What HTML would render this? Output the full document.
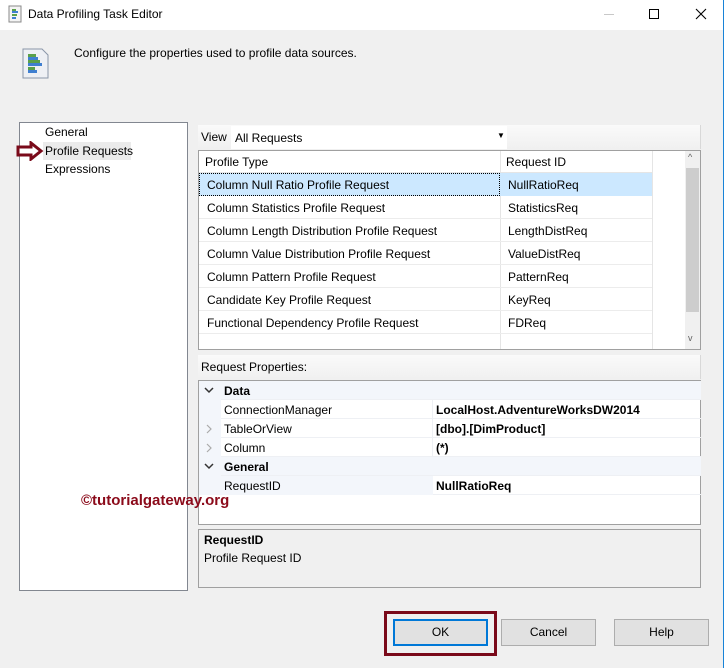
<!DOCTYPE html>
<html><head><style>
*{margin:0;padding:0;box-sizing:border-box}
body{width:724px;height:668px;background:#f0f0f0;font-family:"Liberation Sans",sans-serif;font-size:12px;color:#000;position:relative;overflow:hidden}
.a{position:absolute;white-space:nowrap}
.row{position:absolute;left:199px;width:486px;height:23px;border-bottom:1px solid #ececec}
.row span{position:absolute;top:5px}
.pr{position:absolute;left:199px;width:502px;height:19px;border-bottom:1px solid #eef0f4}
.pr span{position:absolute;top:3px}
.btn{position:absolute;top:619px;height:27px;width:95px;background:#e1e1e1;border:1px solid #adadad;text-align:center;line-height:25px}
</style></head><body>
<div class="a" style="left:0;top:0;width:724px;height:30px;background:#fff"></div>
<div class="a" style="left:723px;top:0;width:1px;height:668px;background:#1883d7"></div>
<svg class="a" style="left:8px;top:5px" width="14" height="18"><rect x="1" y="1" width="12" height="16" fill="#f4f4f4" stroke="#8a8a8a"/><rect x="4" y="4" width="4" height="2" fill="#5aa04a"/><rect x="4" y="6" width="6" height="2" fill="#3f7fd0"/><rect x="4" y="9" width="5" height="2" fill="#5aa04a"/><rect x="4" y="12" width="4" height="2" fill="#3f7fd0"/></svg>
<div class="a" style="left:28px;top:7px;font-size:12px">Data Profiling Task Editor</div>
<div class="a" style="left:604px;top:14px;width:10px;height:1px;background:#c8c8c8"></div>
<div class="a" style="left:649px;top:9px;width:10px;height:10px;border:1px solid #000"></div>
<svg class="a" style="left:695px;top:8px" width="12" height="12"><path d="M1 1L11 11M11 1L1 11" stroke="#000" stroke-width="1.1"/></svg>

<svg class="a" style="left:22px;top:48px" width="28" height="32"><path d="M1 1H20L26 7V30H1Z" fill="#eef0f4" stroke="#8a96a8"/><rect x="6" y="6" width="8" height="3" fill="#5aa04a"/><rect x="6" y="9" width="10" height="3" fill="#3f7fd0"/><rect x="6" y="12" width="12" height="3" fill="#5aa04a"/><rect x="6" y="15" width="14" height="3" fill="#3f7fd0"/><rect x="6" y="19" width="7" height="3" fill="#5aa04a"/><rect x="6" y="22" width="9" height="3" fill="#3f7fd0"/></svg>
<div class="a" style="left:74px;top:46px">Configure the properties used to profile data sources.</div>

<div class="a" style="left:19px;top:122px;width:169px;height:469px;background:#fff;border:1px solid #828790"></div>
<div class="a" style="left:43px;top:142px;width:88px;height:18px;background:#ebebeb"></div>
<div class="a" style="left:45px;top:125px">General</div>
<div class="a" style="left:45px;top:144px">Profile Requests</div>
<div class="a" style="left:45px;top:162px">Expressions</div>
<svg class="a" style="left:16px;top:141px" width="28" height="20"><path d="M2 6H15V2L25 10L15 18V14H2Z" fill="#fff" stroke="#7a0a1a" stroke-width="3" stroke-linejoin="miter"/></svg>

<div class="a" style="left:198px;top:125px;width:503px;height:24px;background:linear-gradient(#fafafa,#f0f0f0);border-right:1px solid #d8d8d8"></div>
<div class="a" style="left:201px;top:130px">View</div>
<div class="a" style="left:231px;top:126px;width:276px;height:23px;background:#fff"></div>
<div class="a" style="left:235px;top:131px">All Requests</div>
<div class="a" style="left:497px;top:131px;font-size:8px">▼</div>

<div class="a" style="left:198px;top:150px;width:503px;height:200px;background:#fff;border:1px solid #a0a0a0"></div>
<div class="a" style="left:199px;top:151px;width:454px;height:22px;border-bottom:1px solid #e5e5e5;border-right:1px solid #e5e5e5"></div>
<div class="a" style="left:500px;top:151px;width:1px;height:198px;background:#e5e5e5"></div>
<div class="a" style="left:652px;top:151px;width:1px;height:198px;background:#e5e5e5"></div>
<div class="a" style="left:205px;top:155px">Profile Type</div>
<div class="a" style="left:506px;top:155px">Request ID</div>
<div class="a" style="left:685px;top:151px;width:15px;height:198px;background:#f0f0f0"></div>
<div class="a" style="left:686px;top:168px;width:13px;height:144px;background:#cdcdcd"></div>
<div class="a" style="left:688px;top:152px;font-size:9px;color:#606060">^</div>
<div class="a" style="left:688px;top:333px;font-size:9px;color:#606060">v</div>
<div class="a" style="left:199px;top:173px;width:453px;height:23px;background:#cce8ff"></div>
<div class="a" style="left:199px;top:173px;width:301px;height:23px;border:1px dotted #000"></div>
<div class="row" style="top:173px;border:none;width:453px"><span style="left:8px">Column Null Ratio Profile Request</span><span style="left:309px">NullRatioReq</span></div>
<div class="row" style="top:196px;width:453px"><span style="left:8px">Column Statistics Profile Request</span><span style="left:309px">StatisticsReq</span></div>
<div class="row" style="top:219px;width:453px"><span style="left:8px">Column Length Distribution Profile Request</span><span style="left:309px">LengthDistReq</span></div>
<div class="row" style="top:242px;width:453px"><span style="left:8px">Column Value Distribution Profile Request</span><span style="left:309px">ValueDistReq</span></div>
<div class="row" style="top:265px;width:453px"><span style="left:8px">Column Pattern Profile Request</span><span style="left:309px">PatternReq</span></div>
<div class="row" style="top:288px;width:453px"><span style="left:8px">Candidate Key Profile Request</span><span style="left:309px">KeyReq</span></div>
<div class="row" style="top:311px;width:453px"><span style="left:8px">Functional Dependency Profile Request</span><span style="left:309px">FDReq</span></div>

<div class="a" style="left:198px;top:355px;width:503px;height:24px;background:linear-gradient(#fafafa,#f0f0f0);border-right:1px solid #d8d8d8"></div>
<div class="a" style="left:201px;top:360px">Request Properties:</div>

<div class="a" style="left:198px;top:380px;width:503px;height:145px;background:#fff;border:1px solid #a0a0a0"></div>
<div class="pr" style="top:381px;background:#f3f6fb"><span style="left:25px;font-weight:bold">Data</span></div>
<div class="pr" style="top:400px"><span style="left:25px">ConnectionManager</span><span style="left:237px;font-weight:bold">LocalHost.AdventureWorksDW2014</span></div>
<div class="pr" style="top:419px"><span style="left:25px">TableOrView</span><span style="left:237px;font-weight:bold">[dbo].[DimProduct]</span></div>
<div class="pr" style="top:438px"><span style="left:25px">Column</span><span style="left:237px;font-weight:bold">(*)</span></div>
<div class="pr" style="top:457px;background:#f3f6fb"><span style="left:25px;font-weight:bold">General</span></div>
<div class="pr" style="top:476px"><span style="left:237px;font-weight:bold">NullRatioReq</span></div>
<div class="a" style="left:221px;top:476px;width:212px;height:19px;background:#f3f6fb"></div>
<div class="a" style="left:224px;top:479px">RequestID</div>
<div class="a" style="left:199px;top:381px;width:22px;height:114px;background:#f3f6fb"></div>
<svg class="a" style="left:204px;top:386px" width="10" height="8"><path d="M1 2L5 6L9 2" fill="none" stroke="#333" stroke-width="1.5"/></svg>
<svg class="a" style="left:205px;top:424px" width="8" height="10"><path d="M2 1L6 5L2 9" fill="none" stroke="#aaa" stroke-width="1.2"/></svg>
<svg class="a" style="left:205px;top:443px" width="8" height="10"><path d="M2 1L6 5L2 9" fill="none" stroke="#aaa" stroke-width="1.2"/></svg>
<svg class="a" style="left:204px;top:462px" width="10" height="8"><path d="M1 2L5 6L9 2" fill="none" stroke="#333" stroke-width="1.5"/></svg>
<div class="a" style="left:432px;top:400px;width:1px;height:57px;background:#eef0f4"></div>

<div class="a" style="left:198px;top:529px;width:503px;height:59px;border:1px solid #a0a0a0"></div>
<div class="a" style="left:204px;top:533px;font-weight:bold">RequestID</div>
<div class="a" style="left:204px;top:551px">Profile Request ID</div>

<div class="a" style="left:81px;top:492px;font-weight:bold;font-size:15px;color:#8b0a1a">©tutorialgateway.org</div>

<div class="a" style="left:384px;top:611px;width:113px;height:45px;border:3px solid #7a0a1a"></div>
<div class="btn" style="left:393px;border:2px solid #0078d7;line-height:23px">OK</div>
<div class="btn" style="left:501px">Cancel</div>
<div class="btn" style="left:614px">Help</div>
</body></html>
